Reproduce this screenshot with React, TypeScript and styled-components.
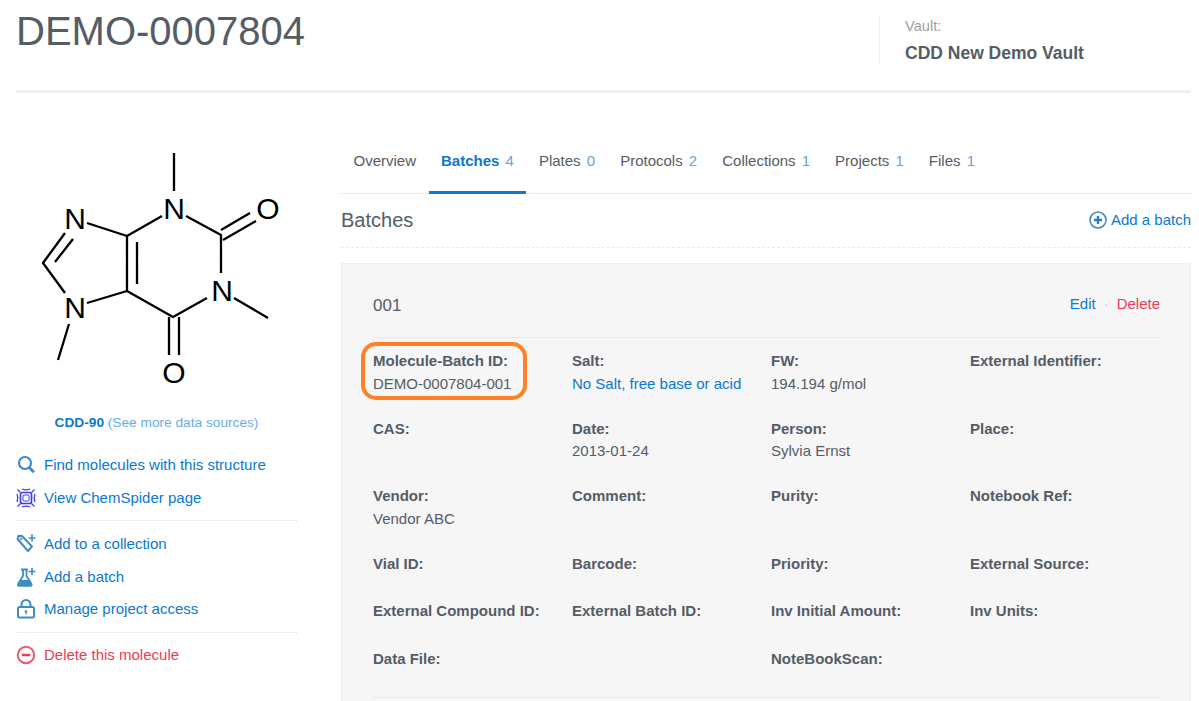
import React from "react";
import styled, { createGlobalStyle } from "styled-components";

const Global = createGlobalStyle`
  html, body { margin: 0; padding: 0; height: 701px; overflow: hidden; background: #fff; }
  body { font-family: "Liberation Sans", Arial, sans-serif; color: #555c66; }
`;

const Page = styled.div`
  width: 1199px;
  height: 701px;
  overflow: hidden;
  padding: 0 8px 0 16px;
  box-sizing: border-box;
`;

const Header = styled.header`
  display: flex;
  justify-content: space-between;
  height: 90px;
  border-bottom: 3px solid #eeeff0;
`;

const Title = styled.h1`
  margin: 8px 0 0;
  font-size: 40px;
  line-height: 46px;
  font-weight: 400;
  color: #555c66;
`;

const VaultBox = styled.div`
  width: 312px;
  height: 47px;
  margin-top: 17px;
  padding-left: 25px;
  box-sizing: border-box;
  border-left: 1px solid #eeeff0;
`;

const VaultLabel = styled.div`
  font-size: 14.6px;
  line-height: 18px;
  color: #9a9ea5;
`;

const VaultName = styled.div`
  margin-top: 8px;
  font-size: 17.5px;
  line-height: 20px;
  font-weight: 700;
  color: #555c66;
`;

const Body = styled.div`
  display: flex;
  gap: 44px;
`;

const Sidebar = styled.aside`
  width: 281px;
  flex: none;
`;

const Molecule = styled.svg`
  display: block;
  width: 281px;
  height: 265px;
  margin-top: 47px;
`;

const Source = styled.div`
  margin-top: 10px;
  text-align: center;
  font-size: 13.7px;
  line-height: 16px;
  color: #66aee6;
  strong { color: #0a78d0; font-weight: 700; }
`;

const LinkGroup = styled.div<{ $top: number; $bottom: number }>`
  padding-bottom: ${(p) => p.$bottom}px;
  margin-top: ${(p) => p.$top}px;
  display: flex;
  flex-direction: column;
`;

const Divider = styled.div`
  border-top: 1px dotted #dfe1e4;
`;

const SideLink = styled.div<{ $danger?: boolean; $h?: number }>`
  display: flex;
  align-items: center;
  height: ${(p) => p.$h ?? 33}px;
  gap: 8px;
  font-size: 15px;
  color: ${(p) => (p.$danger ? "#ee3a55" : "#0a78d0")};
  svg { flex: none; width: 20px; height: 20px; }
`;

const Main = styled.main`
  flex: 1;
  min-width: 0;
  position: relative;
`;

const Tabs = styled.nav`
  display: flex;
  height: 50px;
  margin-top: 50px;
  border-bottom: 1px solid #e6e8eb;
`;

const Tab = styled.div<{ $active?: boolean }>`
  box-sizing: border-box;
  height: 51px;
  padding: 9px 12.5px 0;
  font-size: 15px;
  line-height: 18px;
  white-space: nowrap;
  color: ${(p) => (p.$active ? "#0a78d0" : "#555c66")};
  font-weight: ${(p) => (p.$active ? 700 : 400)};
  border-bottom: 3px solid ${(p) => (p.$active ? "#0a78d0" : "transparent")};
  span { margin-left: 6.2px; color: #6c9fd2; font-weight: 400; }
`;

const SectionHead = styled.div`
  display: flex;
  justify-content: space-between;
  align-items: center;
  height: 53px;
  border-bottom: 1px dashed #e9eaec;
`;

const SectionTitle = styled.h2`
  margin: 0;
  font-size: 20px;
  font-weight: 400;
  color: #555c66;
`;

const AddBatch = styled.div`
  display: flex;
  align-items: center;
  gap: 4px;
  padding-bottom: 2px;
  font-size: 15px;
  color: #0a78d0;
  svg { width: 18px; height: 18px; }
`;

const Card = styled.section`
  margin-top: 15px;
  height: 520px;
  box-sizing: border-box;
  padding: 0 30px 0 31px;
  background: #f6f6f7;
  border: 1px solid #eeeff0;
`;

const CardHead = styled.div`
  display: flex;
  justify-content: space-between;
  align-items: center;
  height: 74px;
  padding-top: 8px;
  box-sizing: border-box;
  border-bottom: 1px solid #e8e9f0;
`;

const CardTitle = styled.div`
  font-size: 17px;
  padding-top: 2px;
  color: #555c66;
`;

const Actions = styled.div`
  display: flex;
  gap: 8px;
  padding-bottom: 2px;
  font-size: 15px;
  align-items: center;
  color: #c9ccd0;
`;

const Edit = styled.span`color: #0a78d0;`;
const Del = styled.span`color: #ee3a55;`;

const Fields = styled.div`
  display: grid;
  grid-template-columns: repeat(4, 199px);
  grid-template-rows: 67.5px 67.5px 68px 47px 48px 47px;
  padding-top: 14px;
  border-bottom: 1px solid #e8e9f0;
`;

const Field = styled.div`
  font-size: 15px;
  line-height: 18px;
`;

const Label = styled.div`
  font-weight: 700;
  color: #555c66;
`;

const Value = styled.div<{ $link?: boolean }>`
  margin-top: 4.6px;
  color: ${(p) => (p.$link ? "#0a78d0" : "#555c66")};
`;

const Highlight = styled.div`
  position: absolute;
  left: 20px;
  top: 249px;
  width: 166px;
  height: 58px;
  box-sizing: border-box;
  border: 4px solid #ff8026;
  border-radius: 15px;
  pointer-events: none;
`;

const Ink = styled.g`
  stroke: #000;
  stroke-width: 2.3;
  stroke-linecap: butt;
  stroke-linejoin: round;
  fill: none;
`;

const Atom = styled.text`
  font-family: "Liberation Sans", Arial, sans-serif;
  font-size: 30px;
  fill: #000;
  text-anchor: middle;
  dominant-baseline: central;
`;

const B = "#3f8cc4";

const SearchIcon = () => (
  <svg viewBox="0 0 20 20" fill="none" stroke={B} strokeWidth="2.2">
    <circle cx="9" cy="8" r="6" />
    <path d="M13.2 12.4l4.8 4.8" strokeWidth="2.8" />
  </svg>
);

const SpiderIcon = () => (
  <svg viewBox="0 0 20 20" fill="none" stroke="#3f3ff0" strokeWidth="1.3">
    <rect x="4.5" y="4.5" width="11" height="11" rx="2" strokeWidth="1.7" />
    <rect x="7" y="7" width="6" height="6" rx="1" strokeWidth="1" />
    <path d="M4.5 4.5L1.5 1.5M15.5 4.5l3-3M4.5 15.5l-3 3M15.5 15.5l3 3" />
    <path d="M1 6q1.700 4 0 8M19 6q-1.700 4 0 8M6 1q4 1.700 8 0M6 19q4-1.700 8 0" />
  </svg>
);

const TagIcon = () => (
  <svg viewBox="0 0 20 20" fill="none" stroke={B} strokeWidth="1.9">
    <path d="M1.5 5L2.5 1.800 6 2l10 10.500-4 4.500z" strokeLinejoin="round" />
    <circle cx="5" cy="5" r="1" strokeWidth="1" />
    <path d="M16 .5v7M12.500 4h7" strokeWidth="1.7" />
  </svg>
);

const FlaskIcon = () => (
  <svg viewBox="0 0 20 20" fill="none" stroke={B} strokeWidth="1.8">
    <path d="M5 2.500h7M7 2.500V9L2 17q-.6 1.800 1 1.800h11.500q1.600 0 1-1.800L10.500 9V2.500" strokeLinejoin="round" />
    <path d="M5 13h7.500l3.500 5.800H2z" fill={B} stroke="none" />
    <path d="M16 1v7M12.500 4.500h7" strokeWidth="1.7" />
  </svg>
);

const LockIcon = () => (
  <svg viewBox="0 0 20 20" fill="none" stroke={B} strokeWidth="2">
    <rect x="2" y="8" width="16" height="10.5" rx="1.5" />
    <path d="M5.500 8V5.500a4.500 4.500 0 019 0V8" />
    <circle cx="10" cy="12.5" r="1.3" fill={B} stroke="none" />
    <path d="M10 13v2.500" strokeWidth="1.2" />
  </svg>
);

const MinusIcon = () => (
  <svg viewBox="0 0 20 20" fill="none" stroke="#ee5a70" strokeWidth="2">
    <circle cx="10" cy="10" r="8.2" />
    <path d="M5.800 10h8.400" strokeWidth="2.4" stroke="#ee3a55" />
  </svg>
);

const PlusCircleIcon = () => (
  <svg viewBox="0 0 18 18" fill="none" stroke={B} strokeWidth="1.6">
    <circle cx="9" cy="9" r="8" />
    <path d="M9 5v8M5 9h8" strokeWidth="2.4" stroke="#2a7fc0" />
  </svg>
);

const tabs: [string, string][] = [
  ["Overview", ""],
  ["Batches", "4"],
  ["Plates", "0"],
  ["Protocols", "2"],
  ["Collections", "1"],
  ["Projects", "1"],
  ["Files", "1"],
];

const fields: { label: string; value?: string; link?: boolean }[] = [
  { label: "Molecule-Batch ID:", value: "DEMO-0007804-001" },
  { label: "Salt:", value: "No Salt, free base or acid", link: true },
  { label: "FW:", value: "194.194 g/mol" },
  { label: "External Identifier:" },
  { label: "CAS:" },
  { label: "Date:", value: "2013-01-24" },
  { label: "Person:", value: "Sylvia Ernst" },
  { label: "Place:" },
  { label: "Vendor:", value: "Vendor ABC" },
  { label: "Comment:" },
  { label: "Purity:" },
  { label: "Notebook Ref:" },
  { label: "Vial ID:" },
  { label: "Barcode:" },
  { label: "Priority:" },
  { label: "External Source:" },
  { label: "External Compound ID:" },
  { label: "External Batch ID:" },
  { label: "Inv Initial Amount:" },
  { label: "Inv Units:" },
  { label: "Data File:" },
  { label: "" },
  { label: "NoteBookScan:" },
  { label: "" },
];

export default function App() {
  return (
    <Page>
      <Global />
      <Header>
        <Title>DEMO-0007804</Title>
        <VaultBox>
          <VaultLabel>Vault:</VaultLabel>
          <VaultName>CDD New Demo Vault</VaultName>
        </VaultBox>
      </Header>
      <Body>
        <Sidebar>
          <Molecule viewBox="16 140 281 265">
            <Ink>
              <path d="M174 153V191M162 216L127 236V291M137 242V284M87 223L127 236M65 233L43 263L65 293M73 239L55 262M87 303L127 291M69 324L58 360M127 291L173 317L207 298M234 298L268 318M221 273V235L186 216M221 230L250 213M223 240L256 221M169 317V355M179 317V355" />
            </Ink>
            <Atom x="174" y="208">N</Atom>
            <Atom x="75" y="218">N</Atom>
            <Atom x="75" y="307">N</Atom>
            <Atom x="222" y="290">N</Atom>
            <Atom x="268" y="208">O</Atom>
            <Atom x="174" y="372">O</Atom>
          </Molecule>
          <Source><strong>CDD-90</strong> (See more data sources)</Source>
          <LinkGroup $top={17} $bottom={6}>
            <SideLink><SearchIcon />Find molecules with this structure</SideLink>
            <SideLink><SpiderIcon />View ChemSpider page</SideLink>
          </LinkGroup>
          <Divider />
          <LinkGroup $top={6} $bottom={8}>
            <SideLink><TagIcon />Add to a collection</SideLink>
            <SideLink><FlaskIcon />Add a batch</SideLink>
            <SideLink $h={31}><LockIcon />Manage project access</SideLink>
          </LinkGroup>
          <Divider />
          <LinkGroup $top={5} $bottom={6}>
            <SideLink $danger><MinusIcon />Delete this molecule</SideLink>
          </LinkGroup>
        </Sidebar>
        <Main>
          <Tabs>
            {tabs.map(([name, count]) => (
              <Tab key={name} $active={name === "Batches"}>
                {name}
                {count && <span>{count}</span>}
              </Tab>
            ))}
          </Tabs>
          <SectionHead>
            <SectionTitle>Batches</SectionTitle>
            <AddBatch><PlusCircleIcon />Add a batch</AddBatch>
          </SectionHead>
          <Card>
            <CardHead>
              <CardTitle>001</CardTitle>
              <Actions><Edit>Edit</Edit>·<Del>Delete</Del></Actions>
            </CardHead>
            <Fields>
              {fields.map((f, i) => (
                <Field key={i}>
                  <Label>{f.label}</Label>
                  {f.value && <Value $link={f.link}>{f.value}</Value>}
                </Field>
              ))}
            </Fields>
          </Card>
          <Highlight />
        </Main>
      </Body>
    </Page>
  );
}
